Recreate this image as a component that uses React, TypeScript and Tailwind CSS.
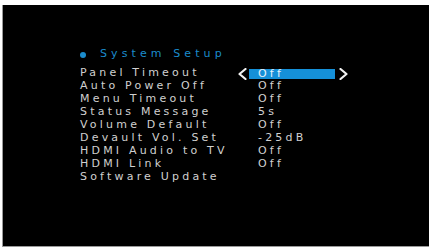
const rows: [string, string][] = [
  ["Panel Timeout", "Off"],
  ["Auto Power Off", "Off"],
  ["Menu Timeout", "Off"],
  ["Status Message", "5s"],
  ["Volume Default", "Off"],
  ["Devault Vol. Set", "-25dB"],
  ["HDMI Audio to TV", "Off"],
  ["HDMI Link", "Off"],
  ["Software Update", ""],
];

const Chevron = ({ dir }: { dir: "left" | "right" }) => (
  <svg width="9" height="12" viewBox="0 0 9 12" className="shrink-0">
    <polyline
      points={dir === "left" ? "7.5,1 1.5,6 7.5,11" : "1.5,1 7.5,6 1.5,11"}
      fill="none"
      stroke="#f2f2f2"
      strokeWidth="2.2"
      strokeLinecap="round"
      strokeLinejoin="round"
    />
  </svg>
);

export default function App() {
  return (
    <div className="w-[432px] h-[249px] bg-white pl-[2px] pt-[5px] pr-[3px] pb-[2px]">
      <div
        className="h-full w-full bg-black border-l border-b border-[#9a9a9a] pl-[74px] pt-[43px]"
        style={{ fontFamily: '"DejaVu Sans", sans-serif' }}
      >
        <div className="flex items-center h-[13px] text-[11px] text-[#1b8ccc] tracking-[4.1px]">
          <span className="w-[6px] h-[6px] rounded-full bg-[#1b8ccc] ml-[3px] mr-[14px]" />
          <span>System Setup</span>
        </div>
        <div className="mt-[6px] flex flex-col text-[11px] text-[#d0d0d0] tracking-[3.2px]">
          {rows.map(([label, value], i) => (
            <div key={label} className="flex items-center h-[13px]">
              <span className="w-[161px] pl-[3px] whitespace-nowrap">{label}</span>
              {i === 0 ? (
                <>
                  <span className="w-[11px] flex items-center">
                    <Chevron dir="left" />
                  </span>
                  <span className="w-[86px] h-[10px] bg-[#1590d8] pl-[9px] leading-[10px] text-[#e6f2fa]">{value}</span>
                  <span className="ml-[4px] flex items-center">
                    <Chevron dir="right" />
                  </span>
                </>
              ) : (
                <span className="pl-[20px] whitespace-nowrap">{value}</span>
              )}
            </div>
          ))}
        </div>
      </div>
    </div>
  );
}
